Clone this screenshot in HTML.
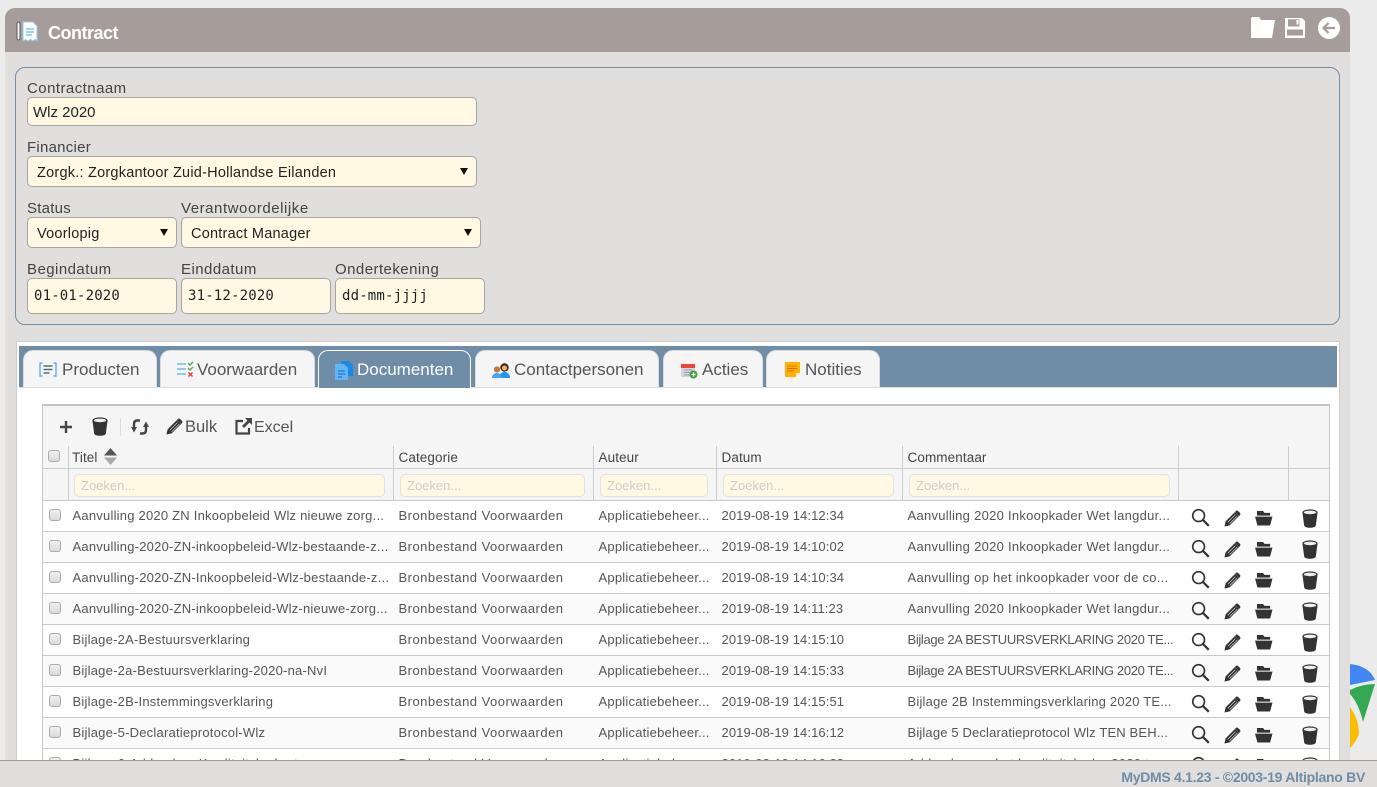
<!DOCTYPE html>
<html><head><meta charset="utf-8"><title>Contract</title>
<style>
html,body{margin:0;padding:0;width:1377px;height:787px;overflow:hidden;background:#ebebeb;font-family:"Liberation Sans",sans-serif;color:#444}
div,span,svg{position:absolute;box-sizing:border-box}
.t{white-space:nowrap}
.lab{font-size:15px;letter-spacing:.45px;color:#444;line-height:18px;margin-top:1px}
.inp{background:#fff9e3;border:1px solid #a8a4a0;border-radius:5px;color:#222;font-size:15px;white-space:nowrap}
.sel{left:9px;top:7px;line-height:18px;font-size:14.5px;letter-spacing:.23px}
.arr{width:0;height:0;border-left:4px solid transparent;border-right:4px solid transparent;border-top:7px solid #111}
.date{font-family:"DejaVu Sans Mono",monospace;font-size:14px;color:#222;left:6px;top:8px;line-height:18px;white-space:nowrap;letter-spacing:.17px}
.tab{top:350px;height:37px;background:#f5f5f5;border:1px solid #ddd;border-bottom:none;border-radius:10px 10px 0 0;font-size:17px;color:#555}
.tab .t{top:9px;line-height:20px}
.v{width:1px;background:#ccc}
.h{font-size:13.5px;color:#444;top:449px;line-height:17px;letter-spacing:.1px}
.f{top:474px;height:23px;background:#fff9e3;border:1px solid #e4e2da;border-radius:5px;color:#ccc;font-size:13px;line-height:21px;padding-left:6px}
.r{left:43px;width:1286px;height:31px;border-bottom:1px solid #c8c8c8;font-size:13px;color:#555;background:#fff}
.r.a{background:#fafafa}
.r .t{top:6px;line-height:17px;letter-spacing:.22px}
.r .c1{letter-spacing:.48px}
.r .c3{letter-spacing:.1px}
.r .c4{letter-spacing:.27px}
.r .cap{letter-spacing:-.34px}
.c0{left:29.5px}.c1{left:355.5px}.c2{left:555.5px}.c3{left:678.5px}.c4{left:864.5px}
.cb{width:12px;height:12px;left:6px;top:8px;background:linear-gradient(#f0f0f0,#dadada);border:1px solid #aaa;border-radius:3px}
.i1{left:1148px;top:7px}.i2{left:1181px;top:9px}.i3{left:1212px;top:9px}.i4{left:1259px;top:8px}
</style></head><body>
<svg width="0" height="0" style="left:0;top:0">
<defs>
<symbol id="s" viewBox="0 0 20 20"><circle cx="8" cy="8" r="6.200" fill="none" stroke="#333" stroke-width="1.700"/><path d="M12.500 12.500L18.700 18.700" stroke="#333" stroke-width="2.400" fill="none"/></symbol>
<symbol id="p" viewBox="0 0 18 18"><path d="M.5 17.500l1.200-5.500L11.500 2.200l4.300 4.300L6 16.300zM12.500 1.200c.8-.8 1.700-.8 2.400-.1l2 2c.7.700.7 1.600-.1 2.400l-.9.900-4.300-4.300z" fill="#333"/><path d="M4 13l8-8M6 14.500l8-8" stroke="#fff" stroke-width=".6"/></symbol>
<symbol id="o" viewBox="0 0 19 17"><path d="M2 6V1h6.500L10 3h6v3z" fill="#333"/><path d="M0 7h18.500l-2.500 9.500H2.500z" fill="#333"/></symbol>
<symbol id="d" viewBox="0 0 16 19"><ellipse cx="8" cy="3.400" rx="7.600" ry="3" fill="#333"/><path d="M.4 3.400L2.200 16.500C2.500 19.500 13.500 19.500 13.800 16.500L15.600 3.400z" fill="#333"/><ellipse cx="8" cy="3.400" rx="6.200" ry="1.800" fill="#eee"/></symbol>
</defs></svg>

<!-- google logo fragments -->
<svg style="left:1350px;top:660px" width="27" height="100" viewBox="0 0 27 100"><path d="M0 4c11 1 21 6 25 16L0 25z" fill="#4285f4"/><path d="M0 30Q12 24 25 24L13 62Q9 44 0 34z" fill="#34a853"/><path d="M0 47c6 8 9 18 9 27-2 5-5 10-9 14z" fill="#fbbc04"/></svg>

<!-- main card -->
<div style="left:5px;top:8px;width:1345px;height:760px;background:#e0dfdd;border-radius:10px 10px 0 0"></div>
<div style="left:5px;top:8px;width:1345px;height:44px;background:#a69c9a;border-radius:10px 10px 0 0"></div>
<svg style="left:16px;top:21px" width="22" height="21" viewBox="0 0 22 21"><rect x="1" y="1" width="3" height="18" rx="1.500" fill="#f2f2f2" stroke="#444" stroke-width=".8"/><path d="M7 1h10l4 4v15l-2-1.500-2 1.500-2.500-1.500-2.500 1.500-2.500-1.500L7 20z" fill="#fff" stroke="#8fcbf5"/><path d="M10 8h8M10 11h8M10 14h6" stroke="#64b5f6" stroke-width="1.300"/></svg>
<div class="t" style="left:48px;top:21px;font-size:18px;font-weight:bold;color:#fff;line-height:24px;letter-spacing:-.5px">Contract</div>
<svg style="left:1251px;top:17px" width="24" height="21" viewBox="0 0 24 21"><path d="M0 1.500L1 0h7l2 3h14l-3 18H0z" fill="#fff"/></svg>
<svg style="left:1285px;top:18px" width="20" height="20" viewBox="0 0 20 20"><path fill-rule="evenodd" d="M0 0h17l3 3v17H0zM3 1.200V8.500h11.500V1.200zM2 11.500v6h16v-6z" fill="#fff"/><rect x="11.500" y="2" width="2.200" height="4.500" fill="#fff"/></svg>
<svg style="left:1318px;top:17px" width="22" height="22" viewBox="0 0 22 22"><circle cx="11" cy="11" r="11" fill="#fff"/><path d="M17 11H6M10.500 6L5.500 11l5 5" stroke="#a69c9a" stroke-width="2.200" fill="none"/></svg>

<!-- fieldset -->
<div style="left:15px;top:67px;width:1325px;height:258px;border:1px solid #6f8fab;border-radius:10px"></div>
<div class="lab t" style="left:27px;top:79px">Contractnaam</div>
<div class="inp" style="left:27px;top:97px;width:450px;height:29px"><span class="t" style="left:5px;top:6px;line-height:18px;font-size:15px">Wlz 2020</span></div>
<div class="lab t" style="left:27px;top:138px;letter-spacing:.25px">Financier</div>
<div class="inp" style="left:27px;top:156px;width:450px;height:31px"><span class="t sel">Zorgk.: Zorgkantoor Zuid-Hollandse Eilanden</span><span class="arr" style="right:8px;top:11px"></span></div>
<div class="lab t" style="left:27px;top:199px;letter-spacing:.25px">Status</div>
<div class="lab t" style="left:181px;top:199px;letter-spacing:.55px">Verantwoordelijke</div>
<div class="inp" style="left:27px;top:217px;width:150px;height:31px"><span class="t sel">Voorlopig</span><span class="arr" style="right:8px;top:11px"></span></div>
<div class="inp" style="left:181px;top:217px;width:300px;height:31px"><span class="t sel">Contract Manager</span><span class="arr" style="right:8px;top:11px"></span></div>
<div class="lab t" style="left:27px;top:260px">Begindatum</div>
<div class="lab t" style="left:181px;top:260px">Einddatum</div>
<div class="lab t" style="left:335px;top:260px">Ondertekening</div>
<div class="inp" style="left:27px;top:278px;width:150px;height:36px"><span class="date">01-01-2020</span></div>
<div class="inp" style="left:181px;top:278px;width:150px;height:36px"><span class="date">31-12-2020</span></div>
<div class="inp" style="left:335px;top:278px;width:150px;height:36px"><span class="date">dd-mm-jjjj</span></div>

<!-- tabs panel -->
<div style="left:16px;top:341px;width:1324px;height:430px;background:#fff;border:1px solid #ccc"></div>
<div style="left:19px;top:346px;width:1318px;height:41px;background:#6f8da6"></div>
<div style="left:19px;top:387px;width:1318px;height:1px;background:#ddd"></div>

<div class="tab" style="left:23px;width:134px"><svg style="left:15px;top:11px" width="18" height="15" viewBox="0 0 18 15"><path d="M3.500 1H1v13h2.500M14.500 1H17v13h-2.500" fill="none" stroke="#42a5f5" stroke-width="1.200"/><path d="M4.500 4h9M4.500 7.500h9M4.500 11h6" stroke="#546e7a" stroke-width="1.500"/></svg><span class="t" style="left:38px">Producten</span></div>
<div class="tab" style="left:160px;width:155px"><svg style="left:16px;top:10px" width="18" height="17" viewBox="0 0 18 17"><path d="M0 3h9M0 8h9M0 13h9" stroke="#90caf9" stroke-width="2"/><path d="M11 2l2 2 3-3M11 7l2 2 3-3" stroke="#4caf50" stroke-width="1.400" fill="none"/><path d="M11.500 11.500l4 4M15.500 11.500l-4 4" stroke="#f44336" stroke-width="1.500"/></svg><span class="t" style="left:36px">Voorwaarden</span></div>
<div class="tab" style="left:318px;width:153px;height:38px;background:#6f8da6;border:1px solid #fff;border-bottom:none"><svg style="left:16px;top:10px" width="18" height="19" viewBox="0 0 18 19"><path d="M6 0h8l4 4v11H6z" fill="#1e88e5"/><path d="M0 3h9l4 4v12H0z" fill="#64b5f6"/><path d="M3 10h7M3 13h7M3 16h4" stroke="#1565c0" stroke-width="1.100"/></svg><span class="t" style="left:38px;color:#fff">Documenten</span></div>
<div class="tab" style="left:475px;width:184px"><svg style="left:16px;top:12px" width="18" height="15" viewBox="0 0 18 15"><circle cx="12.500" cy="4.500" r="4.200" fill="#3e2723"/><circle cx="12.500" cy="5" r="2.500" fill="#ffb74d"/><path d="M7 15c0-4 2.500-6 5.500-6s5.500 2 5.500 6z" fill="#2196f3"/><circle cx="5" cy="6.500" r="3.100" fill="#bf7a3c"/><path d="M0 15c0-3.500 2.500-5 5-5s5 1.500 5 5z" fill="#42a5f5"/></svg><span class="t" style="left:38px">Contactpersonen</span></div>
<div class="tab" style="left:663px;width:100px"><svg style="left:17px;top:11px" width="17" height="17" viewBox="0 0 17 17"><rect x="0" y="2" width="14" height="13" fill="#cfd8dc"/><rect x="0" y="2" width="14" height="4" fill="#f44336"/><path d="M3 8h8M3 10.500h8M3 13h6" stroke="#90a4ae"/><circle cx="12.500" cy="12.500" r="4" fill="#43a047"/><path d="M10.500 12.500h4M12.500 10.500v4" stroke="#fff" stroke-width="1.200"/></svg><span class="t" style="left:38px">Acties</span></div>
<div class="tab" style="left:766px;width:114px"><svg style="left:18px;top:11px" width="15" height="15" viewBox="0 0 15 15"><path d="M0 0h15v11l-4 4H0z" fill="#ffb300"/><path d="M2 4h10M2 6.500h10M2 9h7" stroke="#e65100" stroke-width=".8"/><path d="M15 11l-4 4v-4z" fill="#fff3c4"/></svg><span class="t" style="left:38px">Notities</span></div>

<!-- grid -->
<div style="left:42px;top:404px;width:1288px;height:97px;background:#f5f5f5;border:1px solid #c8c8c8;border-top:2px solid #c4c4c4;border-bottom:none"></div>
<div style="left:42px;top:404px;width:1px;height:356px;background:#c8c8c8"></div>
<div style="left:1329px;top:404px;width:1px;height:356px;background:#c8c8c8"></div>

<svg style="left:59px;top:420px" width="14" height="14" viewBox="0 0 14 14"><path d="M7 1v12M1 7h12" stroke="#444" stroke-width="2.400"/></svg>
<svg style="left:92px;top:417px" width="16" height="19"><use href="#d"/></svg>
<div style="left:120px;top:418px;width:1px;height:18px;background:#ddd"></div>
<svg style="left:131px;top:418px" width="18" height="18" viewBox="0 0 18 18"><path d="M3 10V6C3 3.500 4.500 2.500 6.500 2.500H9M15 8v4c0 2.500-1.500 3.500-3.500 3.500H9" fill="none" stroke="#444" stroke-width="2.400"/><path d="M0 9l3 5.500L6 9zM18 9l-3-5.500L12 9z" fill="#444"/></svg>
<svg style="left:166px;top:418px" width="17" height="17"><use href="#p"/></svg>
<div class="t" style="left:185px;top:417px;font-size:16.5px;color:#555;line-height:20px">Bulk</div>
<svg style="left:235px;top:418px" width="17" height="17" viewBox="0 0 17 17"><path d="M8 3H1.500v12.500H14V10" fill="none" stroke="#444" stroke-width="2.200"/><path d="M10 0h7v7l-2.500-2.500L9 10 7 8l5.500-5.500z" fill="#444"/></svg>
<div class="t" style="left:254px;top:418px;font-size:16px;color:#555;line-height:20px">Excel</div>

<div style="left:43px;top:468px;width:1286px;height:1px;background:#ccc"></div>
<div style="left:43px;top:500px;width:1286px;height:1px;background:#c8c8c8"></div>
<div class="v" style="left:68px;top:446px;height:54px"></div>
<div class="v" style="left:393px;top:446px;height:54px"></div>
<div class="v" style="left:593px;top:446px;height:54px"></div>
<div class="v" style="left:716px;top:446px;height:54px"></div>
<div class="v" style="left:902px;top:446px;height:54px"></div>
<div class="v" style="left:1178px;top:446px;height:54px"></div>
<div class="v" style="left:1288px;top:446px;height:54px"></div>

<div class="cb" style="left:48px;top:450px"></div>
<div class="h t" style="left:72px">Titel</div>
<svg style="left:103px;top:448px" width="15" height="17" viewBox="0 0 15 17"><path d="M7.500 0L14 7.500H1z" fill="#555"/><path d="M1 9.500h13L7.500 17z" fill="#aaa"/></svg>
<div class="h t" style="left:398.5px">Categorie</div>
<div class="h t" style="left:598.5px">Auteur</div>
<div class="h t" style="left:721.5px">Datum</div>
<div class="h t" style="left:907.5px">Commentaar</div>

<div class="f t" style="left:74px;width:311px">Zoeken...</div>
<div class="f t" style="left:400px;width:185px">Zoeken...</div>
<div class="f t" style="left:600px;width:108px">Zoeken...</div>
<div class="f t" style="left:723px;width:171px">Zoeken...</div>
<div class="f t" style="left:909px;width:261px">Zoeken...</div>

<div class="r" style="top:501px"><div class="cb"></div><span class="t c0">Aanvulling 2020 ZN Inkoopbeleid Wlz nieuwe zorg...</span><span class="t c1">Bronbestand Voorwaarden</span><span class="t c2">Applicatiebeheer...</span><span class="t c3">2019-08-19 14:12:34</span><span class="t c4">Aanvulling 2020 Inkoopkader Wet langdur...</span><svg class="i1" width="19" height="19"><use href="#s"/></svg><svg class="i2" width="17" height="17"><use href="#p"/></svg><svg class="i3" width="18" height="16"><use href="#o"/></svg><svg class="i4" width="16" height="19"><use href="#d"/></svg></div>
<div class="r a" style="top:532px"><div class="cb"></div><span class="t c0">Aanvulling-2020-ZN-inkoopbeleid-Wlz-bestaande-z...</span><span class="t c1">Bronbestand Voorwaarden</span><span class="t c2">Applicatiebeheer...</span><span class="t c3">2019-08-19 14:10:02</span><span class="t c4">Aanvulling 2020 Inkoopkader Wet langdur...</span><svg class="i1" width="19" height="19"><use href="#s"/></svg><svg class="i2" width="17" height="17"><use href="#p"/></svg><svg class="i3" width="18" height="16"><use href="#o"/></svg><svg class="i4" width="16" height="19"><use href="#d"/></svg></div>
<div class="r" style="top:563px"><div class="cb"></div><span class="t c0">Aanvulling-2020-ZN-Inkoopbeleid-Wlz-bestaande-z...</span><span class="t c1">Bronbestand Voorwaarden</span><span class="t c2">Applicatiebeheer...</span><span class="t c3">2019-08-19 14:10:34</span><span class="t c4">Aanvulling op het inkoopkader voor de co...</span><svg class="i1" width="19" height="19"><use href="#s"/></svg><svg class="i2" width="17" height="17"><use href="#p"/></svg><svg class="i3" width="18" height="16"><use href="#o"/></svg><svg class="i4" width="16" height="19"><use href="#d"/></svg></div>
<div class="r a" style="top:594px"><div class="cb"></div><span class="t c0">Aanvulling-2020-ZN-inkoopbeleid-Wlz-nieuwe-zorg...</span><span class="t c1">Bronbestand Voorwaarden</span><span class="t c2">Applicatiebeheer...</span><span class="t c3">2019-08-19 14:11:23</span><span class="t c4">Aanvulling 2020 Inkoopkader Wet langdur...</span><svg class="i1" width="19" height="19"><use href="#s"/></svg><svg class="i2" width="17" height="17"><use href="#p"/></svg><svg class="i3" width="18" height="16"><use href="#o"/></svg><svg class="i4" width="16" height="19"><use href="#d"/></svg></div>
<div class="r" style="top:625px"><div class="cb"></div><span class="t c0">Bijlage-2A-Bestuursverklaring</span><span class="t c1">Bronbestand Voorwaarden</span><span class="t c2">Applicatiebeheer...</span><span class="t c3">2019-08-19 14:15:10</span><span class="t c4 cap">Bijlage 2A BESTUURSVERKLARING 2020 TE...</span><svg class="i1" width="19" height="19"><use href="#s"/></svg><svg class="i2" width="17" height="17"><use href="#p"/></svg><svg class="i3" width="18" height="16"><use href="#o"/></svg><svg class="i4" width="16" height="19"><use href="#d"/></svg></div>
<div class="r a" style="top:656px"><div class="cb"></div><span class="t c0">Bijlage-2a-Bestuursverklaring-2020-na-NvI</span><span class="t c1">Bronbestand Voorwaarden</span><span class="t c2">Applicatiebeheer...</span><span class="t c3">2019-08-19 14:15:33</span><span class="t c4 cap">Bijlage 2A BESTUURSVERKLARING 2020 TE...</span><svg class="i1" width="19" height="19"><use href="#s"/></svg><svg class="i2" width="17" height="17"><use href="#p"/></svg><svg class="i3" width="18" height="16"><use href="#o"/></svg><svg class="i4" width="16" height="19"><use href="#d"/></svg></div>
<div class="r" style="top:687px"><div class="cb"></div><span class="t c0">Bijlage-2B-Instemmingsverklaring</span><span class="t c1">Bronbestand Voorwaarden</span><span class="t c2">Applicatiebeheer...</span><span class="t c3">2019-08-19 14:15:51</span><span class="t c4" style="letter-spacing:.2px">Bijlage 2B Instemmingsverklaring 2020 TE...</span><svg class="i1" width="19" height="19"><use href="#s"/></svg><svg class="i2" width="17" height="17"><use href="#p"/></svg><svg class="i3" width="18" height="16"><use href="#o"/></svg><svg class="i4" width="16" height="19"><use href="#d"/></svg></div>
<div class="r a" style="top:718px"><div class="cb"></div><span class="t c0">Bijlage-5-Declaratieprotocol-Wlz</span><span class="t c1">Bronbestand Voorwaarden</span><span class="t c2">Applicatiebeheer...</span><span class="t c3">2019-08-19 14:16:12</span><span class="t c4" style="letter-spacing:.15px">Bijlage 5 Declaratieprotocol Wlz TEN BEH...</span><svg class="i1" width="19" height="19"><use href="#s"/></svg><svg class="i2" width="17" height="17"><use href="#p"/></svg><svg class="i3" width="18" height="16"><use href="#o"/></svg><svg class="i4" width="16" height="19"><use href="#d"/></svg></div>
<div class="r" style="top:749px"><div class="cb"></div><span class="t c0">Bijlage-6-Addendum-Kwaliteitskader-tgz</span><span class="t c1">Bronbestand Voorwaarden</span><span class="t c2">Applicatiebeheer...</span><span class="t c3">2019-08-19 14:16:33</span><span class="t c4">Addendum op het kwaliteitskader 2020 te...</span><svg class="i1" width="19" height="19"><use href="#s"/></svg><svg class="i2" width="17" height="17"><use href="#p"/></svg><svg class="i3" width="18" height="16"><use href="#o"/></svg><svg class="i4" width="16" height="19"><use href="#d"/></svg></div>

<!-- footer -->
<div style="left:0;top:760px;width:1377px;height:27px;background:#e0dfdd;border-top:1px solid #a69c9a"></div>
<div class="t" style="right:12px;top:768px;font-size:14px;font-weight:bold;color:#6f8da6;line-height:18px;letter-spacing:-.29px">MyDMS 4.1.23 - ©2003-19 Altiplano BV</div>
</body></html>
